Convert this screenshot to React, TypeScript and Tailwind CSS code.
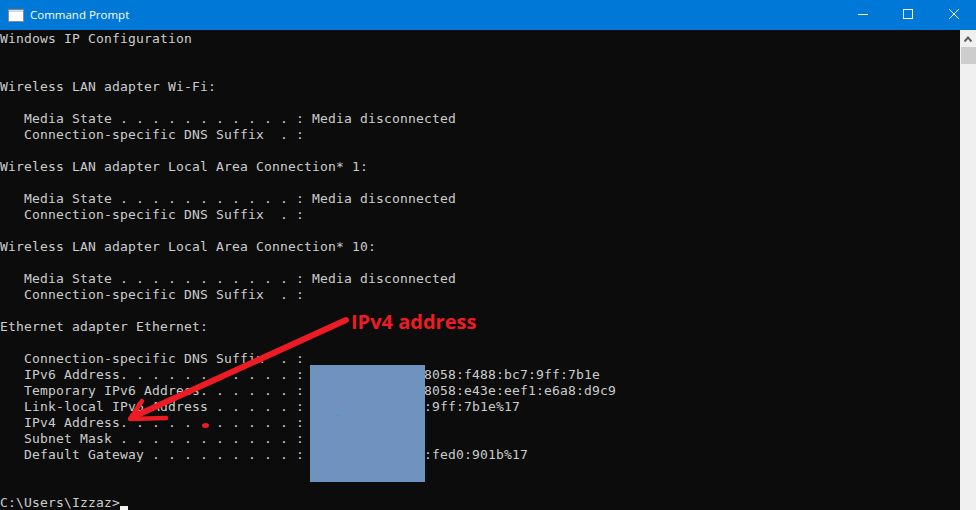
const LINES = [
  'Windows IP Configuration',
  '',
  '',
  'Wireless LAN adapter Wi-Fi:',
  '',
  '   Media State . . . . . . . . . . . : Media disconnected',
  '   Connection-specific DNS Suffix  . :',
  '',
  'Wireless LAN adapter Local Area Connection* 1:',
  '',
  '   Media State . . . . . . . . . . . : Media disconnected',
  '   Connection-specific DNS Suffix  . :',
  '',
  'Wireless LAN adapter Local Area Connection* 10:',
  '',
  '   Media State . . . . . . . . . . . : Media disconnected',
  '   Connection-specific DNS Suffix  . :',
  '',
  'Ethernet adapter Ethernet:',
  '',
  '   Connection-specific DNS Suffix  . :',
  '   IPv6 Address. . . . . . . . . . . :               8058:f488:bc7:9ff:7b1e',
  '   Temporary IPv6 Address. . . . . . :               8058:e43e:eef1:e6a8:d9c9',
  '   Link-local IPv6 Address . . . . . :               :9ff:7b1e%17',
  '   IPv4 Address. . . . . . . . . . . :',
  '   Subnet Mask . . . . . . . . . . . :',
  '   Default Gateway . . . . . . . . . :               :fed0:901b%17',
  '',
  '',
]

function TitleBar() {
  return (
    <div className="h-[30px] shrink-0 bg-[#0078d7] flex items-center text-white">
      <svg width="16" height="13" viewBox="0 0 16 13" className="ml-2">
        <rect x="0.5" y="0.5" width="15" height="12" fill="#ffffff" stroke="#8a8a8a" />
        <rect x="1" y="1" width="14" height="2" fill="#d8d8d8" />
      </svg>
      <span className="ml-[6px] text-[11.5px] font-['Open_Sans','Noto_Sans',sans-serif]">Command Prompt</span>
      <div className="ml-auto flex h-full">
        <button className="w-[46px] pl-[4px] pb-[2px] flex items-center justify-center">
          <svg width="10" height="10" viewBox="0 0 10 10">
            <path d="M0 5.5H10" stroke="#fff" strokeWidth="1" />
          </svg>
        </button>
        <button className="w-[46px] pl-[2px] pb-[2px] flex items-center justify-center">
          <svg width="10" height="10" viewBox="0 0 10 10">
            <rect x="0.5" y="0.5" width="9" height="9" fill="none" stroke="#fff" strokeWidth="1" />
          </svg>
        </button>
        <button className="w-[46px] pl-[2px] pb-[2px] flex items-center justify-center">
          <svg width="10" height="10" viewBox="0 0 10 10">
            <path d="M0 0L10 10M10 0L0 10" stroke="#fff" strokeWidth="1" />
          </svg>
        </button>
      </div>
    </div>
  )
}

function Scrollbar() {
  return (
    <div className="w-4 shrink-0 bg-[#f0f0f0] flex flex-col items-end">
      <div className="w-full h-[17px] flex items-center justify-center">
        <svg width="8" height="6" viewBox="0 0 8 6">
          <path d="M0.5 5.5L4 1.5L7.5 5.5" fill="none" stroke="#606060" strokeWidth="2" />
        </svg>
      </div>
      <div className="w-[15px] h-[17px] bg-[#cdcdcd]" />
    </div>
  )
}

export default function App() {
  return (
    <div className="w-[976px] h-[510px] overflow-hidden flex flex-col bg-[#0c0c0c]">
      <TitleBar />
      <div className="flex flex-1 min-h-0">
        <div className="relative flex-1 min-w-0 pt-px font-['DejaVu_Sans_Mono','Liberation_Mono',monospace] text-[13px] tracking-[0.174px] leading-4 text-[#cccccc]">
          {LINES.map((line, i) => (
            <div key={i} className="h-4 whitespace-pre">{line}</div>
          ))}
          <div className="h-4 whitespace-pre flex">
            <span>{'C:\\Users\\Izzaz>'}</span>
            <span className="w-2 h-[5px] bg-[#f2f2f2] self-end" />
          </div>

          {/* redaction and annotations pasted on top of the console */}
          <div className="absolute left-[310px] top-[335px] w-[115px] h-[117px] bg-[#7092be]" />
          <div className="absolute left-[337px] top-[385px] w-[2px] h-px bg-[#2a9fd8]" />
          <svg className="absolute left-0 top-0 pointer-events-none" width="960" height="480" viewBox="0 0 960 480">
            <path d="M346 290L133 387" stroke="#ed1c24" strokeWidth="6" strokeLinecap="round" fill="none" />
            <path d="M142 371L130 389L166 388" stroke="#ed1c24" strokeWidth="4.5" strokeLinecap="round" strokeLinejoin="round" fill="none" />
            <ellipse cx="205.5" cy="395.5" rx="3.5" ry="2.5" fill="#ed1c24" />
          </svg>
          <span className="absolute left-[351px] top-[277px] text-[20px] leading-[30px] font-bold text-[#ed1c24] font-['Open_Sans','Noto_Sans',sans-serif] tracking-normal whitespace-pre">IPv4 address</span>
        </div>
        <Scrollbar />
      </div>
    </div>
  )
}
